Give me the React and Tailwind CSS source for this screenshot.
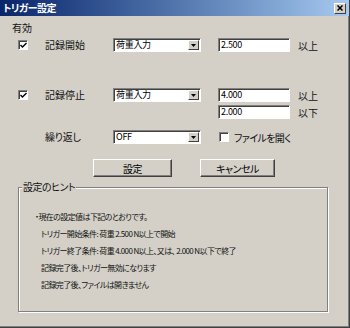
import React from "react";

const font = "font-['Noto_Sans_CJK_JP','Liberation_Sans',sans-serif] [font-feature-settings:'palt']";

function Check({ checked }) {
  return (
    <div className="w-[10px] h-[10px] bg-white border border-t-[#808080] border-l-[#808080] border-b-white border-r-white shadow-[inset_1px_1px_0_#404040] flex items-center justify-center">
      {checked && (
        <svg width="7" height="7" viewBox="0 0 7 7">
          <path d="M0.5 3 L2.5 5 L6.5 1" stroke="#000" strokeWidth="1.4" fill="none" />
        </svg>
      )}
    </div>
  );
}

function Combo({ value }) {
  return (
    <div className="w-[88px] h-[14px] bg-white border border-t-[#808080] border-l-[#808080] border-b-white border-r-white shadow-[inset_1px_1px_0_#404040] flex items-stretch">
      <div className="flex-1 pl-[2px] text-[9px] leading-[12px] tracking-[-0.3px] text-black">{value}</div>
      <div className="w-[11px] m-[1px] bg-[#d4d0c8] border border-t-white border-l-white border-b-[#404040] border-r-[#404040] flex items-center justify-center">
        <svg width="5" height="3" viewBox="0 0 5 3">
          <path d="M0 0 H5 L2.5 3 Z" fill="#000" />
        </svg>
      </div>
    </div>
  );
}

function Edit({ value }) {
  return (
    <div className="w-[72px] h-[14px] bg-white border border-t-[#808080] border-l-[#808080] border-b-white border-r-white shadow-[inset_1px_1px_0_#404040] pl-[2px] text-[9px] leading-[12px] tracking-[-0.3px] text-black">
      {value}
    </div>
  );
}

function Button({ children }) {
  return (
    <div className="h-[18px] bg-[#d4d0c8] border border-t-white border-l-white border-b-[#404040] border-r-[#404040] shadow-[inset_-1px_-1px_0_#808080] flex items-center justify-center text-[10px] tracking-[-0.5px] text-black">
      {children}
    </div>
  );
}

export default function App() {
  return (
    <div className={`w-[350px] h-[328px] bg-[#d4d0c8] border-r border-b border-[#404040] shadow-[inset_-1px_-1px_0_#808080] flex flex-col text-[10px] text-[#111] ${font}`}>
      {/* title bar */}
      <div className="h-[16px] bg-linear-to-r from-[#0a246a] to-[#a6caf0] flex items-center justify-between pl-[3px] pr-[3px]">
        <span className="text-white font-bold text-[10px] leading-[14px] tracking-[-0.5px]">トリガー設定</span>
        <div className="w-[12px] h-[11px] bg-[#d4d0c8] border border-t-white border-l-white border-b-[#404040] border-r-[#404040] flex items-center justify-center">
          <svg width="6" height="6" viewBox="0 0 6 6">
            <path d="M0.5 0.5 L5.5 5.5 M5.5 0.5 L0.5 5.5" stroke="#000" strokeWidth="1.5" />
          </svg>
        </div>
      </div>

      <div className="h-[12px] mt-[6px] pl-[12px] leading-[12px]">有効</div>

      {/* start */}
      <div className="flex items-center h-[14px] mt-[4px]">
        <div className="w-[45px] pl-[18px]"><Check checked /></div>
        <div className="w-[68px] leading-[14px]">記録開始</div>
        <Combo value="荷重入力" />
        <div className="w-[17px]" />
        <Edit value="2.500" />
        <div className="ml-[8px]">以上</div>
      </div>

      {/* stop */}
      <div className="flex items-center h-[14px] mt-[36px]">
        <div className="w-[45px] pl-[18px]"><Check checked /></div>
        <div className="w-[68px] leading-[14px]">記録停止</div>
        <Combo value="荷重入力" />
        <div className="w-[17px]" />
        <Edit value="4.000" />
        <div className="ml-[8px]">以上</div>
      </div>
      <div className="flex items-center h-[14px] mt-[3px] pl-[218px]">
        <Edit value="2.000" />
        <div className="ml-[8px]">以下</div>
      </div>

      {/* repeat */}
      <div className="flex items-center h-[14px] mt-[11px]">
        <div className="w-[45px]" />
        <div className="w-[68px] leading-[14px] tracking-[-0.3px]">繰り返し</div>
        <Combo value="OFF" />
        <div className="w-[18px]" />
        <Check />
        <div className="ml-[5px] tracking-[-0.6px]">ファイルを開く</div>
      </div>

      {/* buttons */}
      <div className="flex mt-[15px] pl-[93px] gap-[28px]">
        <div className="w-[79px]"><Button>設定</Button></div>
        <div className="w-[75px]"><Button>キャンセル</Button></div>
      </div>

      {/* hints */}
      <div className="relative ml-[18px] mt-[10px] w-[310px] h-[125px] border border-[#808080] shadow-[1px_1px_0_#fff,inset_1px_1px_0_#fff]">
        <span className="absolute left-[3px] top-[-7px] px-[1px] bg-[#d4d0c8] leading-[12px] tracking-[-0.5px]">設定のヒント</span>
        <div className="pt-[20px] flex flex-col leading-[17px] text-[8px] tracking-[-0.6px] whitespace-pre">
          <div className="pl-[16px]">・現在の設定値は下記のとおりです。</div>
          <div className="pl-[22px]">トリガー開始条件: 荷重 2.500 N以上で開始</div>
          <div className="pl-[22px]">トリガー終了条件: 荷重 4.000 N以上、又は、 2.000 N以下で終了</div>
          <div className="pl-[22px]">記録完了後、トリガー無効になります</div>
          <div className="pl-[22px]">記録完了後、ファイルは開きません</div>
        </div>
      </div>
    </div>
  );
}
